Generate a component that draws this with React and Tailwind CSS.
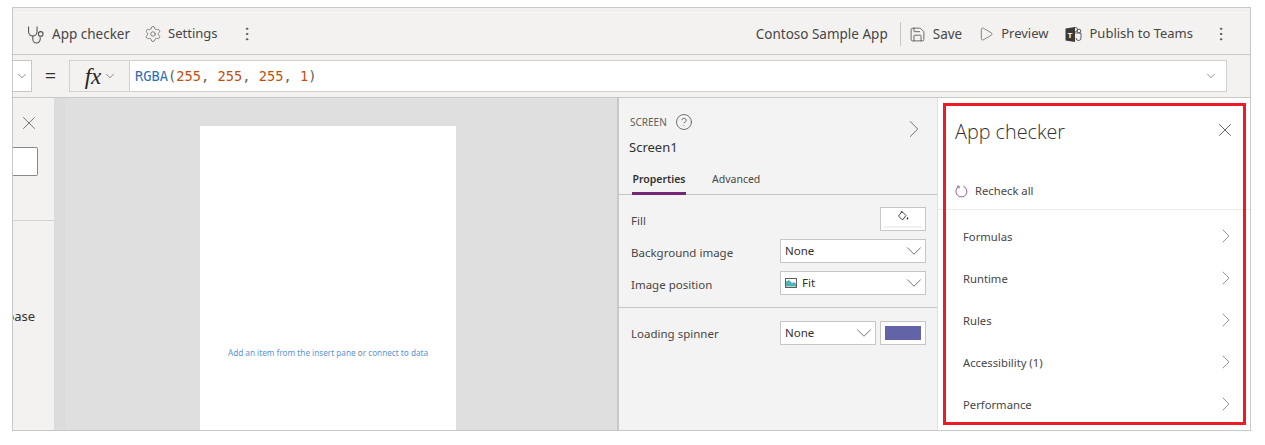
import { Settings, Save, Play, EllipsisVertical, X, ChevronRight, ChevronDown, CircleHelp } from 'lucide-react'

const font = { fontFamily: '"Noto Sans", "Open Sans", sans-serif' }

function Stethoscope() {
  return (
    <svg width="19" height="19" viewBox="0 0 18 18" fill="none" stroke="#505050" strokeWidth="1">
      <path d="M1.500 1.500v5a4 4 0 0 0 8 0v-5" />
      <path d="M5.500 10.500v3a3.500 3.500 0 0 0 7 0v-2" />
      <circle cx="13" cy="8.500" r="2.200" />
    </svg>
  )
}

function TeamsLogo() {
  return (
    <svg width="17" height="17" viewBox="0 0 17 17">
      <circle cx="14" cy="5" r="1.800" fill="none" stroke="#505050" strokeWidth="0.900" />
      <circle cx="10.500" cy="3.500" r="2" fill="none" stroke="#505050" strokeWidth="0.900" />
      <path d="M9 7h7v5a2.500 2.500 0 0 1-5 0" fill="none" stroke="#505050" strokeWidth="0.900" />
      <path d="M0.500 2.500 10 1v15l-9.500-1.500z" fill="#3b3a39" />
      <text x="5" y="11.500" textAnchor="middle" fontSize="8" fontWeight="700" fill="#fff" fontFamily="Liberation Sans, sans-serif">T</text>
    </svg>
  )
}

function ImageIcon() {
  return (
    <svg width="12" height="10" viewBox="0 0 12 10">
      <rect x="0.500" y="0.500" width="11" height="9" fill="#fff" stroke="#605e5c" />
      <path d="M1 8.500V3.500l3-1.500 3 3 2-1 2 2v2.500z" fill="#4fb3b3" />
    </svg>
  )
}

function BucketIcon() {
  return (
    <svg width="12" height="12" viewBox="0 0 12 12" fill="none" stroke="#323130" strokeWidth="0.900">
      <path d="M5 1.500 9 5.500 5.500 10 1.500 6z" />
      <path d="M4 1 5.500 3" />
      <path d="M10.500 7c.6.900.8 1.300.8 1.700a.8.800 0 0 1-1.600 0c0-.4.200-.8.800-1.700z" fill="#323130" stroke="none" />
    </svg>
  )
}

function Select({ label, icon, className }) {
  return (
    <div className={`flex h-[24px] items-center justify-between border border-[#c8c6c4] bg-white pl-[4px] ${className}`}>
      <span className="flex items-center gap-[5px] text-[11.500px] text-[#323130]">
        {icon}
        {label}
      </span>
      <ChevronDown size={26} strokeWidth={0.800} className="-mr-[2px] text-[#605e5c]" />
    </div>
  )
}

function CheckRow({ label }) {
  return (
    <div className="flex h-[42px] items-center justify-between pl-[25px] pr-[12px] text-[11.250px] text-[#484644]">
      <span className="pt-[2px]">{label}</span>
      <ChevronRight size={24} strokeWidth={0.800} className="text-[#797775]" />
    </div>
  )
}

export default function App() {
  return (
    <div className="h-[445px] w-[1265px] overflow-hidden bg-white pl-[12px] pt-[7px]" style={font}>
      <div className="relative flex h-[424px] w-[1239px] flex-col overflow-hidden border border-[#c8c8c8]">
        {/* command bar */}
        <div className="h-[47px] shrink-0 border-b border-[#c8c8c8] bg-[#f3f2f1]">
          <div className="h-[5px] border-b border-[#f8f8f8] bg-[#f1f0ef]" />
          <div className="flex h-[41px] items-center justify-between pl-[14px] pr-[20px] pt-[1px] text-[13.500px] text-[#484644]">
            <div className="flex items-center">
              <Stethoscope />
              <span className="ml-[6px]">App checker</span>
              <Settings size={18} strokeWidth={0.900} className="ml-[14px] text-[#505050]" />
              <span className="ml-[6px] text-[13px]">Settings</span>
              <EllipsisVertical size={18} strokeWidth={1.300} className="ml-[20px] text-[#505050]" />
            </div>
            <div className="flex items-center">
              <span>Contoso Sample App</span>
              <div className="ml-[12px] h-[24px] w-px bg-[#c8c6c4]" />
              <Save size={17} strokeWidth={1.100} className="ml-[8px] text-[#484644]" />
              <span className="ml-[7px]">Save</span>
              <Play size={16} strokeWidth={1} className="ml-[16px] text-[#505050]" />
              <span className="ml-[7px] text-[13px]">Preview</span>
              <span className="ml-[17px]"><TeamsLogo /></span>
              <span className="ml-[7px] text-[13px]">Publish to Teams</span>
              <EllipsisVertical size={18} strokeWidth={1.300} className="ml-[19px] text-[#505050]" />
            </div>
          </div>
        </div>

        {/* formula bar */}
        <div className="flex h-[43px] shrink-0 items-center border-b border-[#c8c8c8] bg-[#f3f2f1] pr-[23px]">
          <div className="flex h-[32px] w-[19px] items-center justify-center border border-l-0 border-[#c8c6c4] bg-white">
            <ChevronDown size={14} strokeWidth={1.100} className="text-[#505050]" />
          </div>
          <span className="ml-[12px] w-[13px] text-center text-[20px] leading-none text-[#323130]">=</span>
          <div className="ml-[12px] flex h-[32px] w-[61px] items-center justify-center gap-[2px] border border-[#d2d0ce] bg-[#f3f2f1] pl-[3px] text-[#252423]">
            <span className="text-[23px] italic leading-none" style={{ fontFamily: '"Liberation Serif", serif' }}>fx</span>
            <ChevronDown size={14} strokeWidth={1.100} className="text-[#505050]" />
          </div>
          <div className="flex h-[32px] flex-1 items-center justify-between border border-l-0 border-[#d2d0ce] bg-white pl-[5px] pr-[8px] text-[13.700px]" style={{ fontFamily: '"DejaVu Sans Mono", monospace' }}>
            <span className="text-[#605e5c]">
              <span className="text-[#2f6db5]">RGBA</span>(<span className="text-[#c1500f]">255</span>, <span className="text-[#c1500f]">255</span>, <span className="text-[#c1500f]">255</span>, <span className="text-[#c1500f]">1</span>)
            </span>
            <ChevronDown size={14} strokeWidth={1.100} className="text-[#605e5c]" />
          </div>
        </div>

        <div className="flex min-h-0 flex-1">
          {/* tree view, cut off on the left */}
          <div className="w-[41px] shrink-0 overflow-hidden bg-[#f3f2f1]">
            <div className="flex justify-end pr-[14px] pt-[14px]">
              <X size={22} strokeWidth={0.800} className="text-[#505050]" />
            </div>
            <div className="mt-[13px] h-[29px] w-[25px] rounded-r-[2px] border border-l-0 border-[#8a8886] bg-white" />
            <div className="mt-[44px] h-px bg-[#d2d0ce]" />
            <div className="mt-[86px] flex w-[22px] justify-end overflow-hidden text-[13px] leading-[18px] text-[#323130]">
              <span className="shrink-0">database</span>
            </div>
          </div>

          {/* canvas */}
          <div className="w-[563px] shrink-0 overflow-hidden border-l-[11px] border-l-[#dcdcdc] bg-[#dfdfdf] pl-[135px] pt-[28px]">
            <div className="flex h-[400px] w-[256px] justify-center bg-white pt-[220px]">
              <span className="text-[8.200px] leading-[14px] text-[#5b94d6]">
                Add an item from the insert pane <span className="text-[#8a8886]">or</span> connect to data
              </span>
            </div>
          </div>

          {/* properties */}
          <div className="w-[321px] shrink-0 border-l-2 border-r border-l-[#c8c8c8] border-r-[#e1e1e1] bg-[#f3f3f3]">
            <div className="flex justify-between pl-[11px] pr-[8px] pt-[15px]">
              <div>
                <div className="flex items-center gap-[8px] text-[10px] text-[#605e5c]">
                  SCREEN
                  <CircleHelp size={18} strokeWidth={1} className="text-[#484644]" />
                </div>
                <div className="-ml-[1px] mt-[7px] text-[13px] leading-[18px] text-[#323130]">Screen1</div>
              </div>
              <ChevronRight size={30} strokeWidth={0.700} className="mt-[1px] text-[#605e5c]" />
            </div>
            <div className="mt-[11px] flex h-[28px] gap-[26px] border-b border-[#c8c6c4] pl-[13px] text-[10.500px]">
              <div className="h-[28px] w-[54px] border-b-[3px] border-[#742774] pt-[5px] text-center font-semibold text-[#323130]">Properties</div>
              <div className="pt-[5px] text-[#484644]">Advanced</div>
            </div>
            <div className="mt-[12px] flex h-[24px] items-center justify-between pl-[12px] pr-[11px] text-[11.500px] text-[#484644]">
              <span className="pt-[3px]">Fill</span>
              <div className="flex h-[24px] w-[46px] flex-col items-center border border-[#c8c6c4] bg-white pt-[2px]">
                <BucketIcon />
                <div className="mt-[4px] h-[2px] w-[38px] bg-[#f0f0f0]" />
              </div>
            </div>
            <div className="mt-[8px] flex items-center justify-between pl-[12px] pr-[11px] text-[11.500px] text-[#484644]">
              <span className="pt-[3px]">Background image</span>
              <Select label="None" className="w-[146px]" />
            </div>
            <div className="mt-[8px] flex items-center justify-between pl-[12px] pr-[11px] text-[11.500px] text-[#484644]">
              <span className="pt-[3px]">Image position</span>
              <Select label="Fit" icon={<ImageIcon />} className="w-[146px]" />
            </div>
            <div className="mt-[12px] h-px bg-[#c8c6c4]" />
            <div className="mt-[13px] flex items-center pl-[12px] pr-[11px] text-[11.500px] text-[#484644]">
              <span className="flex-1 pt-[2px]">Loading spinner</span>
              <Select label="None" className="w-[96px]" />
              <div className="ml-[4px] flex h-[24px] w-[46px] items-center justify-center border border-[#c8c6c4] bg-white">
                <div className="h-[14px] w-[36px] bg-[#6264a7]" />
              </div>
            </div>
          </div>

          {/* app checker pane */}
          <div className="relative min-w-0 flex-1 bg-white">
            <div className="flex items-center justify-between pl-[17px] pr-[14px] pt-[18px]">
              <span className="text-[19.800px] font-light leading-[32px] text-[#323130]" style={{ fontFamily: '"Open Sans", sans-serif' }}>App checker</span>
              <X size={22} strokeWidth={0.800} className="-mt-[5px] text-[#323130]" />
            </div>
            <div className="mt-[28px] flex h-[34px] items-center gap-[7px] border-b border-[#edebe9] pb-[3px] pl-[17px] text-[11.250px] text-[#484644]">
              <svg width="13" height="13" viewBox="0 0 13 13" fill="none" stroke="#9a5a9a" strokeWidth="1">
                <path d="M3.800 1.600a5.500 5.500 0 1 0 4.500-.3" />
                <path d="M1.800 1.200h2.300v2.300" />
              </svg>
              <span>Recheck all</span>
            </div>
            <div className="pt-[5px]">
              <CheckRow label="Formulas" />
              <CheckRow label="Runtime" />
              <CheckRow label="Rules" />
              <CheckRow label="Accessibility (1)" />
              <CheckRow label="Performance" />
            </div>
            {/* red callout around the pane */}
            <div className="absolute bottom-[5px] left-[5px] right-[4px] top-[5px] border-[3px] border-[#ed1c24]" />
          </div>
        </div>
      </div>
    </div>
  )
}
